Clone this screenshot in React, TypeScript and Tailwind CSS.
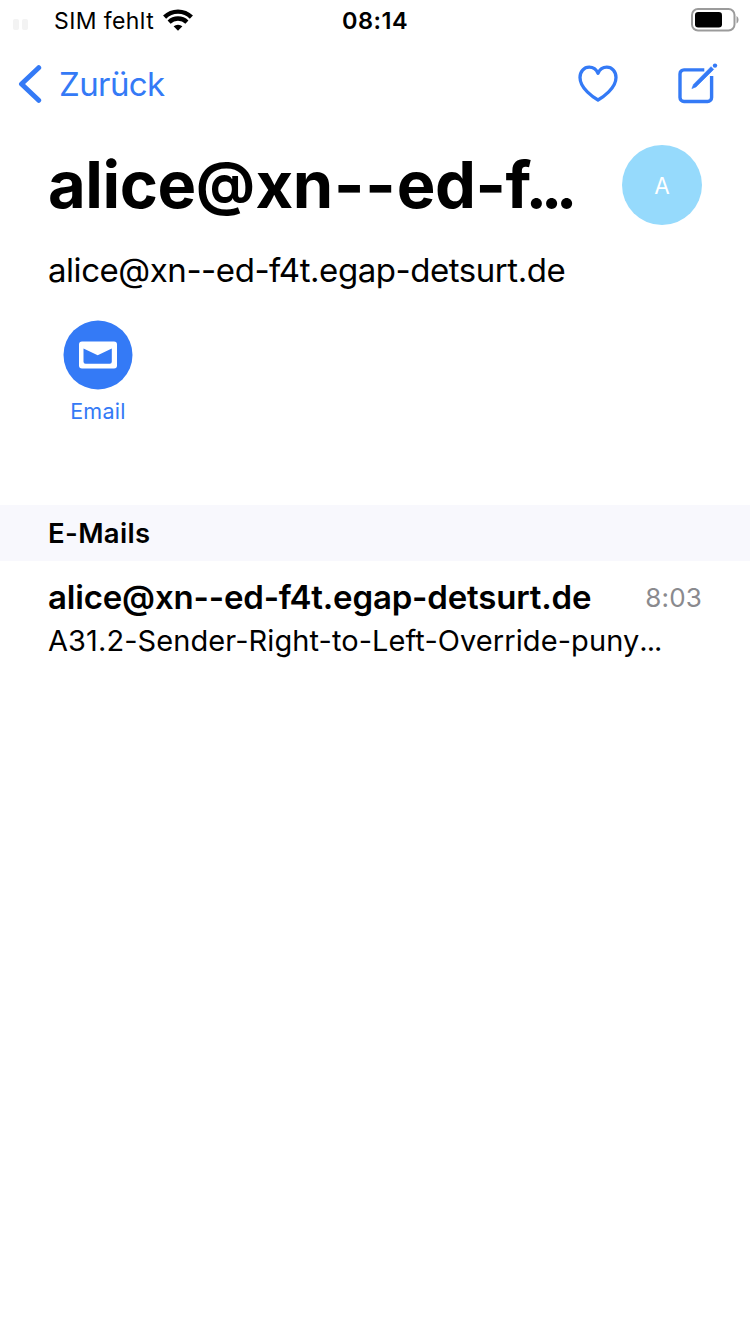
function StatusBar() {
  return (
    <div className="flex h-10 items-center">
      <div className="flex flex-1 items-center pl-[13px]">
        <div className="mt-2 flex gap-[3px]">
          <span className="h-[11px] w-[6px] rounded-[2px] bg-[#f3f3f3]" />
          <span className="h-[11px] w-[6px] rounded-[2px] bg-[#f3f3f3]" />
        </div>
        <span className="ml-[26px] whitespace-nowrap pt-0.5 text-[23px] leading-10 tracking-[0.4px]">SIM fehlt</span>
        <svg className="ml-[9px]" width="30" height="22" viewBox="0 0 30 22" fill="none" stroke="#000" strokeWidth="4.400">
          <path d="M1.6 8.1a19.2 19.2 0 0 1 26.8 0" />
          <path d="M6.1 13.100a12.800 12.800 0 0 1 17.800 0" />
          <path d="M10.6 17.300a6.800 6.800 0 0 1 8.800 0L15 21.800z" fill="#000" stroke="none" />
        </svg>
      </div>
      <span className="pr-0.5 pt-0.5 text-[23.500px] font-semibold leading-10 tracking-[0.5px]">08:14</span>
      <div className="flex flex-1 justify-end pr-[11px]">
        <svg width="48" height="24" viewBox="0 0 48 24">
          <rect x="1" y="1" width="42.5" height="21.5" rx="6" fill="none" stroke="#9b9b9b" strokeWidth="2" />
          <rect x="4" y="4" width="27" height="15.5" rx="3.2" />
          <path d="M45.5 8c2.7 1.3 2.7 6.300 0 7.600z" fill="#9b9b9b" />
        </svg>
      </div>
    </div>
  );
}

function NavBar() {
  return (
    <div className="flex h-[88px] items-center pl-[18px] pr-[31px] text-[#347af6]">
      <svg width="24" height="40" viewBox="0 0 24 40" fill="none" stroke="currentColor" strokeWidth="5" strokeLinecap="round" strokeLinejoin="round">
        <path d="M20.700 3.700L3.500 20 20.700 36.300" />
      </svg>
      <span className="ml-[17px] flex-1 text-[33px] leading-10 tracking-[-0.6px]">Zurück</span>
      <svg width="42" height="40" viewBox="0 0 42 40" fill="none" stroke="currentColor" strokeWidth="3.300" strokeLinejoin="round">
        <path d="M21 36C16.500 33.500 3 24.500 3 13.500 3 7.500 7 3.200 12.200 3.200 16.200 3.200 19.300 5.500 21 9.200 22.700 5.500 25.800 3.200 29.800 3.200 35 3.200 39 7.500 39 13.500 39 24.500 25.500 33.500 21 36Z" />
      </svg>
      <svg className="ml-[58px]" width="42" height="42" viewBox="0 0 42 42" fill="none" stroke="currentColor" strokeWidth="3.400">
        <path d="M27.300 6.900H7a4 4 0 0 0-4 4v23.600a4 4 0 0 0 4 4h23.600a4 4 0 0 0 4-4V13" />
        <path d="M34 3.700l2.700 2.700L19 23.900l-4.100 1.700 1.600-4.200z" fill="currentColor" strokeWidth="0.600" />
        <circle cx="38" cy="2.600" r="2.200" fill="currentColor" stroke="none" />
      </svg>
    </div>
  );
}

export default function App() {
  return (
    <div className="min-h-[1334px] w-[750px] bg-white font-['Inter',sans-serif] text-black">
      <StatusBar />
      <NavBar />
      <section className="flex h-[377px] flex-col px-12 pt-[17px]">
        <div className="flex h-20 items-center justify-between">
          <h1 className="whitespace-nowrap text-[65px] font-bold leading-[80px] tracking-[-0.4px]">
            alice<span className="align-[4px] text-[58px] leading-none tracking-[0.5px]">@</span>x
            <span className="tracking-[0.900px]">n--</span>ed-<span className="tracking-[-6px]">f</span>
            <span className="tracking-[-6.500px]">...</span>
          </h1>
          <div className="flex size-20 items-center justify-center rounded-full bg-[#96dafc] pt-0.5 text-[22.500px] text-white">A</div>
        </div>
        <p className="mt-[25px] whitespace-nowrap text-[33px] leading-10 tracking-[-0.450px]">alice@xn--ed-f4t.egap-detsurt.de</p>
        <div className="mt-[30px] flex w-[100px] flex-col items-center text-[#347af6]">
          <svg width="70" height="70" viewBox="0 0 70 70">
            <circle cx="35" cy="35" r="34.500" fill="currentColor" />
            <rect x="16" y="21.500" width="38" height="27" rx="3" fill="#fff" />
            <path d="M20.500 28.500L34.700 35.200 48.800 28.500V41.800a2 2 0 0 1-2 2H22.500a2 2 0 0 1-2-2z" fill="currentColor" />
          </svg>
          <span className="mt-[7px] text-[21.500px] leading-7 tracking-[0.300px]">Email</span>
        </div>
      </section>
      <h2 className="h-14 bg-[#f8f8fd] px-12 text-[27.500px] font-semibold leading-[56px] tracking-[0.350px]">E-Mails</h2>
      <section className="px-12 pt-4">
        <div className="flex justify-between leading-10">
          <span className="whitespace-nowrap text-[33px] font-semibold tracking-[-0.170px]">alice@xn--ed-f4t.egap-detsurt.de</span>
          <span className="pt-px text-[26px] tracking-[0.200px] text-[#8a8a8e]">8:03</span>
        </div>
        <p className="mt-[3px] whitespace-nowrap text-[29px] leading-10 tracking-[0.080px]">
          A31.2-Sender-Right-to-Left-Override-puny<span className="tracking-[-1px]">...</span>
        </p>
      </section>
    </div>
  );
}
